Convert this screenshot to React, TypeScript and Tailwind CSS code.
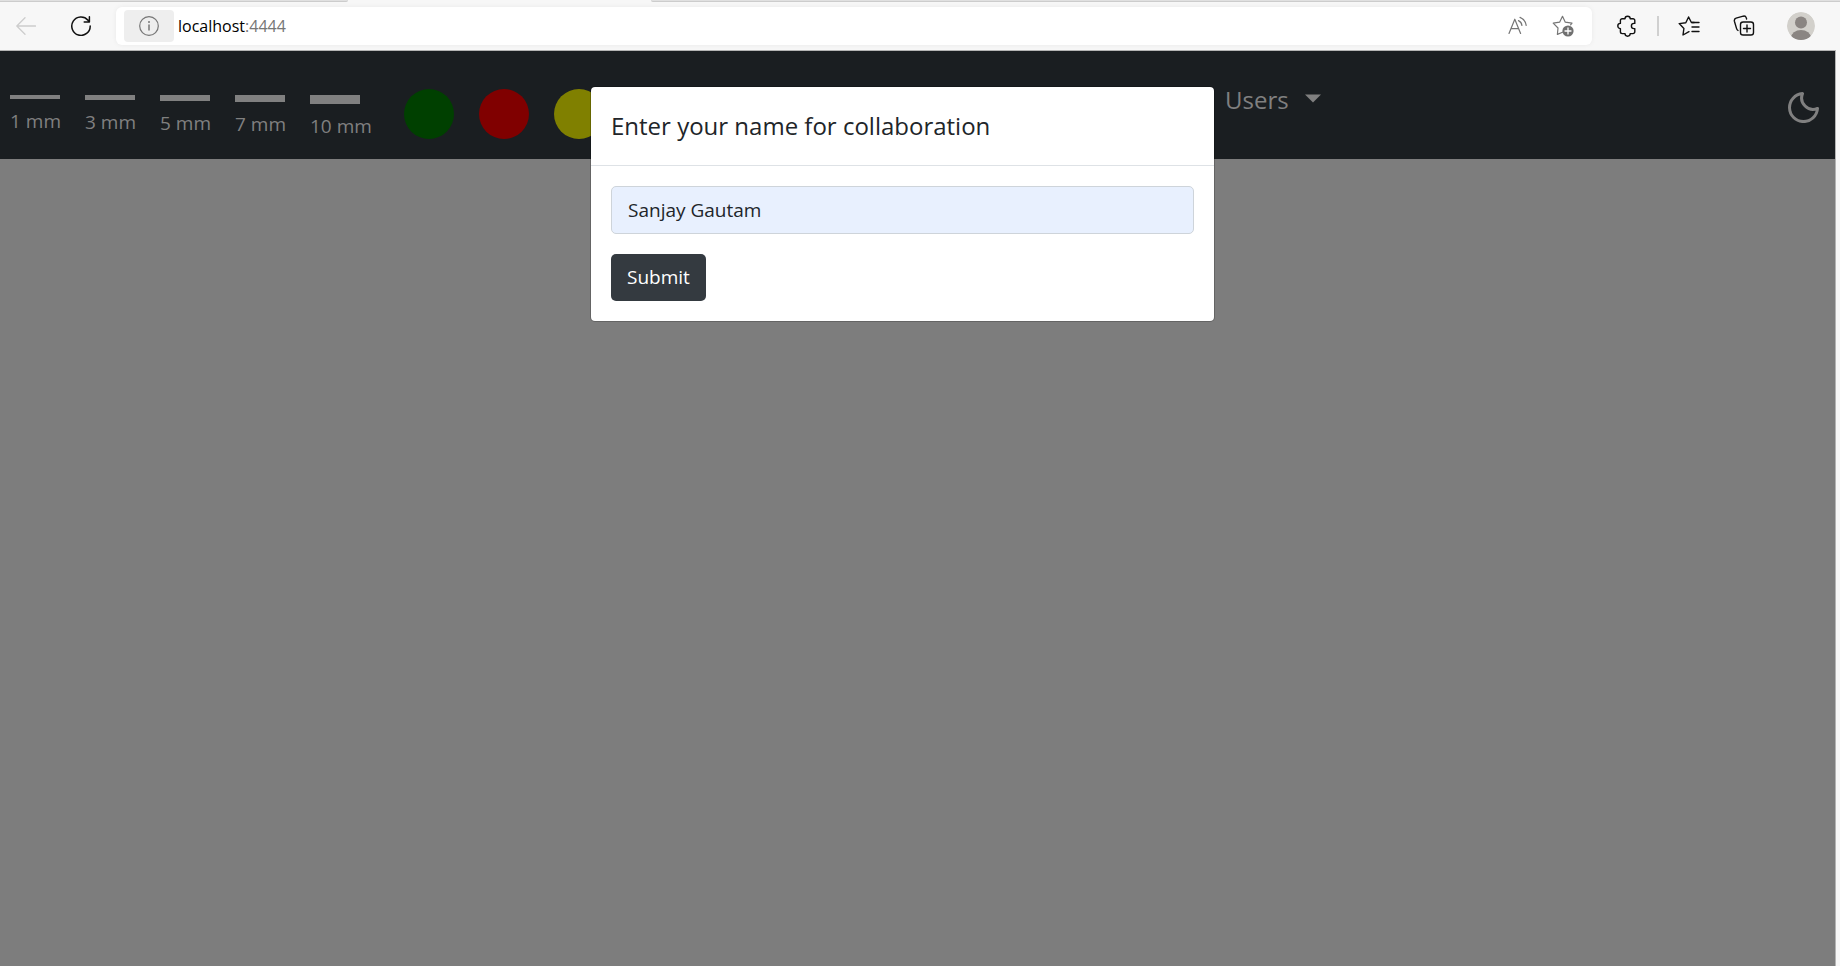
import React from "react";

const strokes = [
  { label: "1 mm", bar: "h-1" },
  { label: "3 mm", bar: "h-[5px]" },
  { label: "5 mm", bar: "h-1.5" },
  { label: "7 mm", bar: "h-[7px]" },
  { label: "10 mm", bar: "h-[9px]" },
];

const colors = [
  { name: "Green", fill: "bg-[#004000]" },
  { name: "Red", fill: "bg-[#800000]" },
  { name: "Yellow", fill: "bg-[#808000]" },
];

function ReadAloudIcon() {
  return (
    <svg width="20" height="20" viewBox="0 0 20 20" fill="none" stroke="#767676" strokeWidth="1.2" strokeLinecap="round" strokeLinejoin="round">
      <path d="M1 17.5 6.8 3.2 12.6 17.5M3 12.6h7.6" />
      <path d="M10.5 4.6a6 6 0 0 1 3.4 4.8M12 1.4a10 10 0 0 1 6.2 8" />
    </svg>
  );
}

function StarAddIcon() {
  return (
    <svg width="22" height="22" viewBox="0 0 22 22" fill="none">
      <path d="M10.5 17.2 5.4 19.4 6 13 1.2 8.2 7.6 7.2 10.5 1.3 13.3 7.2 20 8.2 18.6 9.8" stroke="#767676" strokeWidth="1.2" strokeLinejoin="round" strokeLinecap="round" />
      <circle cx="16" cy="16" r="5.6" fill="#707070" />
      <path d="M16 13v6M13 16h6" stroke="#fff" strokeWidth="1.3" strokeLinecap="round" />
    </svg>
  );
}

function ExtensionsIcon() {
  return (
    <svg width="20" height="22" viewBox="0 0 20 22" fill="none" stroke="#111" strokeWidth="1.4" strokeLinejoin="round">
      <path d="M5.2 3.8H8a2.6 2.6 0 0 1 5.2 0H16a1.8 1.8 0 0 1 1.8 1.8V8.4H17a2.6 2.6 0 0 0 0 5.2h.8v3.2a1.8 1.8 0 0 1-1.8 1.8h-2.8a2.6 2.6 0 0 1-5.2 0H5.2a1.8 1.8 0 0 1-1.8-1.8v-3.2a2.6 2.6 0 0 1 0-5.2V5.6A1.8 1.8 0 0 1 5.2 3.8Z" />
    </svg>
  );
}

function FavoritesIcon() {
  return (
    <svg width="22" height="20" viewBox="0 0 22 20" fill="none" stroke="#111" strokeWidth="1.4" strokeLinejoin="round" strokeLinecap="round">
      <path d="M11 15.7 5 19l.9-6.5L1.2 7.6 7.8 6.700 10.6 1l2.8 5.5h2.8" />
      <path d="M14 6.5h7M14 11h7M14 15.5h7" />
    </svg>
  );
}

function CollectionsIcon() {
  return (
    <svg width="22" height="22" viewBox="0 0 22 22" fill="none" stroke="#111" strokeWidth="1.4" strokeLinejoin="round" strokeLinecap="round">
      <path d="M5 15.5A3 3 0 0 1 3.6 13.6L1.4 6.2A2.6 2.6 0 0 1 3.1 3.2L10.2 1.2A2.6 2.6 0 0 1 13.3 2.9L13.6 4" />
      <rect x="7.5" y="7" width="13" height="13" rx="2.6" />
      <path d="M14 10v7M10.5 13.5h7" />
    </svg>
  );
}

function ProfileIcon() {
  return (
    <svg width="28" height="28" viewBox="0 0 28 28">
      <defs>
        <clipPath id="avatar-clip">
          <circle cx="14" cy="14" r="14" />
        </clipPath>
      </defs>
      <g clipPath="url(#avatar-clip)">
        <circle cx="14" cy="14" r="14" fill="#d2d0cb" />
        <circle cx="14" cy="10.5" r="6" fill="#8a8582" />
        <ellipse cx="14" cy="26" rx="10" ry="8" fill="#8a8582" />
      </g>
    </svg>
  );
}

function BrowserBar() {
  return (
    <div className="shrink-0 bg-[#f7f7f7]">
      <div className="flex h-0.5 justify-between">
        <div className="w-[348px] rounded-br-sm border-b border-[#cccccc] bg-[#e0e0e0]" />
        <div className="w-[70%] max-w-[1189px] rounded-bl-sm border-b border-[#cccccc] bg-[#e0e0e0]" />
      </div>
      <div className="flex h-12 items-center">
        <button aria-label="Back" className="ml-4 flex w-5 justify-center">
          <svg width="20" height="18" viewBox="0 0 20 18" fill="none" stroke="#cdcdcd" strokeWidth="1.3" strokeLinecap="round" strokeLinejoin="round">
            <path d="M19.5 9H.8M9 .8.8 9 9 17.2" />
          </svg>
        </button>
        <button aria-label="Refresh" className="ml-[35px] flex w-5 justify-center">
          <svg width="20" height="20" viewBox="0 0 20 20" fill="none" stroke="#111" strokeWidth="1.5" strokeLinecap="round" strokeLinejoin="round">
            <path d="M19.2 10A9.2 9.2 0 1 1 17 4.2L18.2 5.6M18.4.8V6H13.2" />
          </svg>
        </button>
        <div className="ml-[25px] flex h-[38px] min-w-0 flex-1 items-center rounded-md bg-white pl-2 pr-[18px] shadow-[0_0_5px_rgba(0,0,0,0.06)]">
          <button aria-label="View site information" className="flex h-8 w-[50px] shrink-0 items-center justify-center rounded-sm bg-[#eeeeee]">
            <svg width="20" height="20" viewBox="0 0 20 20" fill="none" stroke="#767676" strokeWidth="1.2">
              <circle cx="10" cy="10" r="9.3" />
              <path d="M10 8.5v6" strokeWidth="1.5" />
              <circle cx="10" cy="6" r="1" fill="#767676" stroke="none" />
            </svg>
          </button>
          <div className="ml-1 flex-1 whitespace-nowrap text-base text-[#767676]">
            <span className="text-black">localhost</span>:4444
          </div>
          <button aria-label="Read aloud" className="mr-6"><ReadAloudIcon /></button>
          <button aria-label="Add to favorites"><StarAddIcon /></button>
        </div>
        <button aria-label="Extensions" className="ml-[25px]"><ExtensionsIcon /></button>
        <div className="ml-5 h-5 w-0.5 bg-[#d0d0d0]" />
        <button aria-label="Favorites" className="ml-[19px]"><FavoritesIcon /></button>
        <button aria-label="Collections" className="ml-[33px]"><CollectionsIcon /></button>
        <button aria-label="Profile" className="ml-8 mr-[25px]"><ProfileIcon /></button>
      </div>
      <div className="mr-1 h-px bg-[#b4b4b4]" />
    </div>
  );
}

function NavBar() {
  return (
    <nav className="flex h-[108px] items-start bg-[#1a1e21] pl-2.5 text-[#808080]">
      <div className="flex items-start gap-[25px] pt-11">
        {strokes.map((s) => (
          <button key={s.label} className="w-[50px] whitespace-nowrap text-left text-[19px] leading-[30px]">
            <span className={"mb-[7px] block bg-[#808080] " + s.bar} />
            {s.label}
          </button>
        ))}
      </div>
      <div className="ml-11 flex gap-[25px] pt-[38px]">
        {colors.map((c) => (
          <button key={c.name} aria-label={c.name} className={"size-[50px] rounded-full " + c.fill} />
        ))}
      </div>
      <button className="ml-[621px] flex items-center gap-4 pt-[30px] text-2xl leading-[38px]">
        Users
        <svg width="16" height="9" viewBox="0 0 16 9" fill="currentColor" className="mb-1">
          <path d="M0 .5h16L8 8.5Z" />
        </svg>
      </button>
      <button aria-label="Dark mode" className="ml-auto mr-4 mt-[41px]">
        <svg width="31" height="31" viewBox="0 0 31 31" fill="none" stroke="currentColor" strokeWidth="3" strokeLinejoin="round" strokeLinecap="round">
          <path d="M14.5 1.6A14 14 0 1 0 29.5 16.5A11.5 11.5 0 0 1 14.5 1.6Z" />
        </svg>
      </button>
    </nav>
  );
}

function NameDialog() {
  return (
    <div className="absolute inset-x-0 top-[35px] flex justify-center pr-[30px]">
      <div role="dialog" aria-labelledby="dialog-title" className="w-full max-w-[625px] rounded-[5px] border border-black/20 bg-white bg-clip-padding text-[#212529]">
        <header className="border-b border-[#dee2e6] px-5 py-[21px]">
          <h5 id="dialog-title" className="text-2xl font-medium leading-9">Enter your name for collaboration</h5>
        </header>
        <form className="p-5" onSubmit={(e) => e.preventDefault()}>
          <input
            aria-label="Name"
            defaultValue="Sanjay Gautam"
            className="block h-12 w-full rounded-[5px] border border-[#ced4da] bg-[#e8f0fe] px-4 text-[19px] text-[#212529] outline-none"
          />
          <button type="submit" className="mt-5 h-[47px] rounded-[5px] bg-[#343a40] px-4 text-[19px] text-white">
            Submit
          </button>
        </form>
      </div>
    </div>
  );
}

export default function App() {
  return (
    <div className="flex h-screen flex-col overflow-hidden bg-[#f7f7f7] font-['Open_Sans','Noto_Sans',sans-serif]">
      <BrowserBar />
      <main className="relative mr-1 min-h-0 flex-1 border-r border-[#b4b4b4] bg-[#7d7d7d]">
        <NavBar />
        <NameDialog />
      </main>
    </div>
  );
}
